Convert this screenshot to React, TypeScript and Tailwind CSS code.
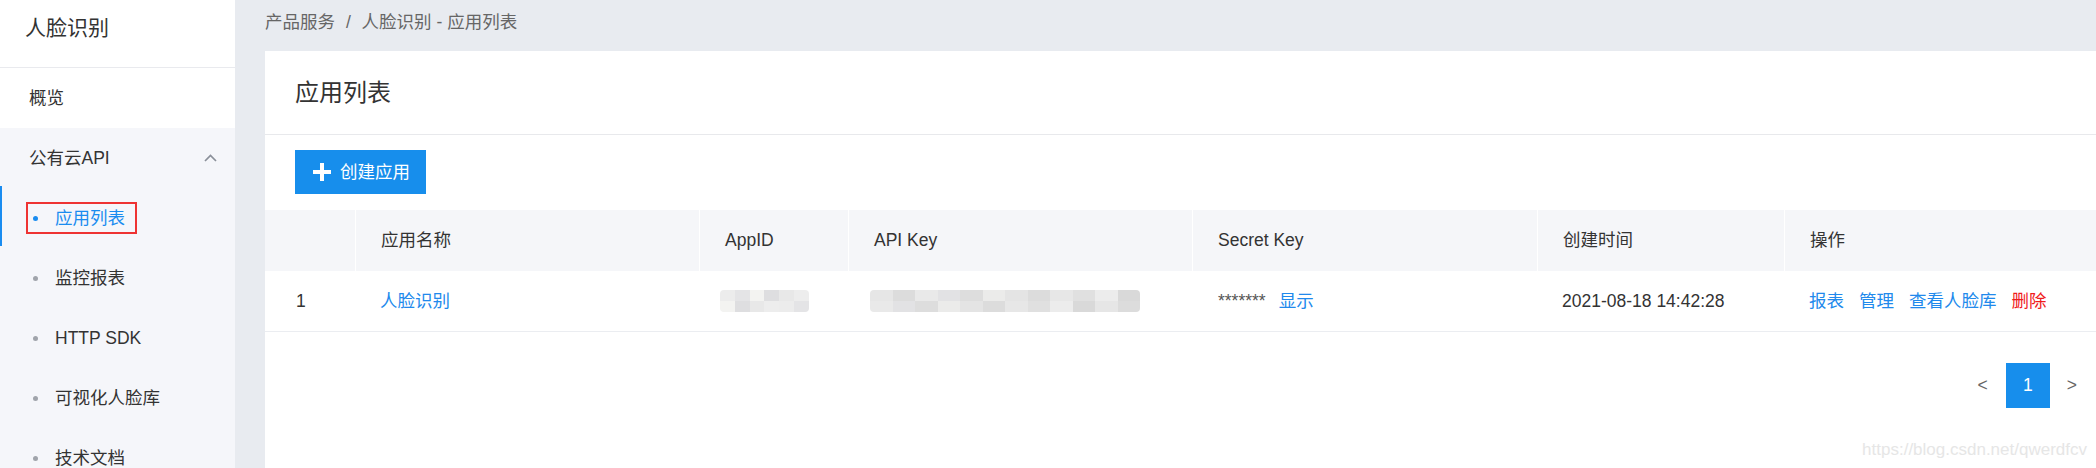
const font = { fontFamily: '"Liberation Sans", "Noto Sans CJK SC", sans-serif' };

const subItems = [
  { label: '应用列表', active: true },
  { label: '监控报表' },
  { label: 'HTTP SDK' },
  { label: '可视化人脸库' },
  { label: '技术文档' },
];

const columns = ['', '应用名称', 'AppID', 'API Key', 'Secret Key', '创建时间', '操作'];

function Sidebar() {
  return (
    <aside className="w-[235px] shrink-0 bg-[#f5f6fa] flex flex-col">
      <div className="h-[68px] shrink-0 bg-white border-b border-[#e9eaee] pl-[25px] pt-[14px] text-[21px] leading-[28px] text-[#333]">
        人脸识别
      </div>
      <div className="h-[60px] shrink-0 bg-white flex items-center pl-[29px] text-[17.5px] text-[#333]">概览</div>
      <div className="h-[60px] shrink-0 flex items-center justify-between pl-[29px] pr-[18px] text-[17.5px] text-[#333]">
        <span>公有云API</span>
        <svg width="13" height="8" viewBox="0 0 13 8">
          <polyline points="1,7 6.5,1.5 12,7" fill="none" stroke="#8a8f99" strokeWidth="1.7" />
        </svg>
      </div>
      {subItems.map(({ label, active }) => (
        <div key={label} className="relative h-[60px] shrink-0 flex items-center pl-[33px] text-[17.5px]">
          <span className={active ? 'w-[5px] h-[5px] rounded-full bg-[#1a8cf0]' : 'w-[5px] h-[5px] rounded-full bg-[#a0a4ab]'} />
          <span className={active ? 'ml-[17px] text-[#1a8cf0]' : 'ml-[17px] text-[#333]'}>{label}</span>
          {active && (
            <>
              <span className="absolute left-0 top-[-2px] w-[2px] h-[60px] bg-[#1a8cf0]" />
              <span className="absolute left-[26px] top-[14px] w-[111px] h-[32px] border-2 border-[#ee3333]" />
            </>
          )}
        </div>
      ))}
    </aside>
  );
}

function Blur({ w, shades }: { w: number; shades: string[] }) {
  return (
    <div className="flex h-[22px] rounded-sm overflow-hidden" style={{ width: w }}>
      {shades.map((c, i) => (
        <div key={i} className="flex-1 flex flex-col">
          <div className="flex-1" style={{ background: c }} />
          <div className="flex-1" style={{ background: shades[(i + 2) % shades.length] }} />
        </div>
      ))}
    </div>
  );
}

export default function App() {
  return (
    <div className="relative flex w-[2096px] h-[468px] overflow-hidden bg-[#e8ebf0]" style={font}>
      <Sidebar />

      <main className="flex-1 min-w-0 pl-[30px] flex flex-col">
        <div className="h-[51px] shrink-0 pt-[10px] leading-[24px] text-[17.5px] text-[#666]">
          产品服务 <span className="mx-[6px]">/</span> 人脸识别 - 应用列表
        </div>

        <div className="flex-1 bg-white">
          <div className="h-[84px] border-b border-[#e8e9ec] pl-[30px] flex items-center text-[24px] text-[#333]">
            应用列表
          </div>

          <div className="pt-[15px] pb-[16px] pl-[30px]">
            <button className="h-[44px] w-[131px] bg-[#178eec] text-white text-[17.5px] flex items-center pl-[18px]">
              <svg width="18" height="18" viewBox="0 0 18 18">
                <rect x="7" y="0" width="4" height="18" fill="white" />
                <rect x="0" y="7" width="18" height="4" fill="white" />
              </svg>
              <span className="ml-[9px]">创建应用</span>
            </button>
          </div>

          <div className="grid grid-cols-[90px_344px_149px_344px_345px_247px_1fr] h-[61px] bg-[#f5f6f9] text-[17.5px] text-[#333]">
            {columns.map((c, i) => (
              <div key={i} className={i === 0 ? 'flex items-center' : 'flex items-center pl-[25px] border-l border-white'}>
                {c}
              </div>
            ))}
          </div>

          <div className="grid grid-cols-[90px_344px_149px_344px_345px_247px_1fr] h-[61px] border-b border-[#ebedf1] text-[17.5px] text-[#333]">
            <div className="flex items-center pl-[31px]">1</div>
            <div className="flex items-center pl-[25px] text-[#2189ec]">人脸识别</div>
            <div className="flex items-center pl-[21px]">
              <Blur w={89} shades={['#ececec', '#e4e4e6', '#f3f3f1', '#dedee0', '#e8e8e8', '#ededed']} />
            </div>
            <div className="flex items-center pl-[22px]">
              <Blur
                w={270}
                shades={['#e6e6e6', '#dcdcdc', '#e9e9e9', '#e2e2e4', '#dddddd', '#ebebea', '#e4e4e4', '#dcdcdc', '#e7e7e7', '#e0e0e0', '#ececec', '#d9d9d9']}
              />
            </div>
            <div className="flex items-center pl-[26px]">
              <span className="text-[#555]">*******</span>
              <span className="ml-[13px] text-[#2189ec]">显示</span>
            </div>
            <div className="flex items-center pl-[25px]">2021-08-18 14:42:28</div>
            <div className="flex items-center pl-[25px] gap-[15px] text-[#2189ec]">
              <span>报表</span>
              <span>管理</span>
              <span>查看人脸库</span>
              <span className="text-[#f01b1b]">删除</span>
            </div>
          </div>

          <div className="mt-[31px] flex justify-end items-center pr-[19px] text-[17.5px] text-[#666]">
            <span>&lt;</span>
            <span className="ml-[18px] w-[44px] h-[45px] bg-[#178eec] text-white flex items-center justify-center">1</span>
            <span className="ml-[17px]">&gt;</span>
          </div>
        </div>
      </main>

      <div className="absolute right-[9px] bottom-[8px] text-[17px] leading-[20px] text-[#e6e6e6]">
        https://blog.csdn.net/qwerdfcv
      </div>
    </div>
  );
}
